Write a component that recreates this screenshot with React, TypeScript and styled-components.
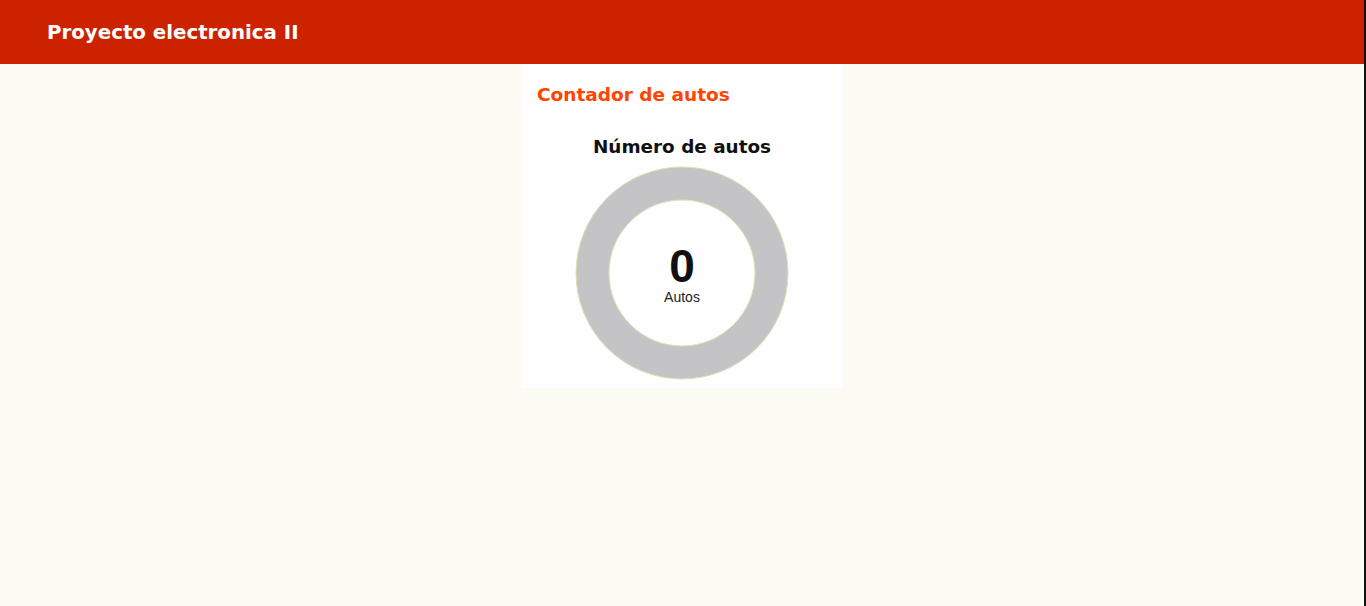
import React from 'react';
import styled, { createGlobalStyle } from 'styled-components';

const GlobalStyle = createGlobalStyle`
    html, body {
        margin: 0;
        padding: 0;
        background: #fbfbf3;
        font-family: "Liberation Sans", Arial, sans-serif;
    }
`;

const Page = styled.div`
    min-height: 606px;
    border-right: 2px solid #111;
    box-sizing: border-box;
`;

const Header = styled.header`
    height: 64px;
    background: #cc2200;
    display: flex;
    align-items: center;
    padding-left: 47px;
`;

const Brand = styled.h1`
    margin: 0;
    color: #fff;
    font-family: "DejaVu Sans", "Liberation Sans", sans-serif;
    font-size: 19.8px;
    font-weight: 700;
`;

const Main = styled.main`
    display: flex;
    justify-content: center;
`;

const Card = styled.section`
    width: 322px;
    height: 324px;
    background: #fefefe;
    box-sizing: border-box;
    padding: 20px 16px 0;
    display: flex;
    flex-direction: column;
`;

const CardTitle = styled.h2`
    margin: 0;
    color: #ff4400;
    font-family: "DejaVu Sans", "Liberation Sans", sans-serif;
    font-size: 18.5px;
    font-weight: 700;
`;

const Widget = styled.div`
    display: flex;
    flex-direction: column;
    align-items: center;
    margin-top: 31px;
`;

const WidgetTitle = styled.h3`
    margin: 0;
    color: #111;
    font-family: "DejaVu Sans", "Liberation Sans", sans-serif;
    font-size: 18.4px;
    font-weight: 700;
`;

const Donut = styled.div`
    position: relative;
    width: 214px;
    height: 214px;
    margin-top: 9px;
`;

const Center = styled.div`
    position: absolute;
    inset: 0;
    display: flex;
    flex-direction: column;
    align-items: center;
    justify-content: center;
    padding-top: 4px;
`;

const Count = styled.div`
    font-size: 46px;
    font-weight: 700;
    line-height: 40px;
    color: #111;
`;

const Unit = styled.div`
    font-size: 14px;
    color: #222;
    line-height: 16px;
    margin-top: 3px;
`;

export default function App() {
    const count = 0;
    return (
        <Page>
            <GlobalStyle />
            <Header>
                <Brand>Proyecto electronica II</Brand>
            </Header>
            <Main>
                <Card>
                    <CardTitle>Contador de autos</CardTitle>
                    <Widget>
                        <WidgetTitle>Número de autos</WidgetTitle>
                        <Donut>
                            <svg width="214" height="214" viewBox="0 0 214 214">
                                <circle cx="107" cy="107" r="89.5" fill="none" stroke="#c4c4c6" strokeWidth="33" />
                                <circle cx="107" cy="107" r="106" fill="none" stroke="#e2e0b0" strokeWidth="1" />
                                <circle cx="107" cy="107" r="73" fill="none" stroke="#e2e0b0" strokeWidth="1" />
                            </svg>
                            <Center>
                                <Count>{count}</Count>
                                <Unit>Autos</Unit>
                            </Center>
                        </Donut>
                    </Widget>
                </Card>
            </Main>
        </Page>
    );
}
